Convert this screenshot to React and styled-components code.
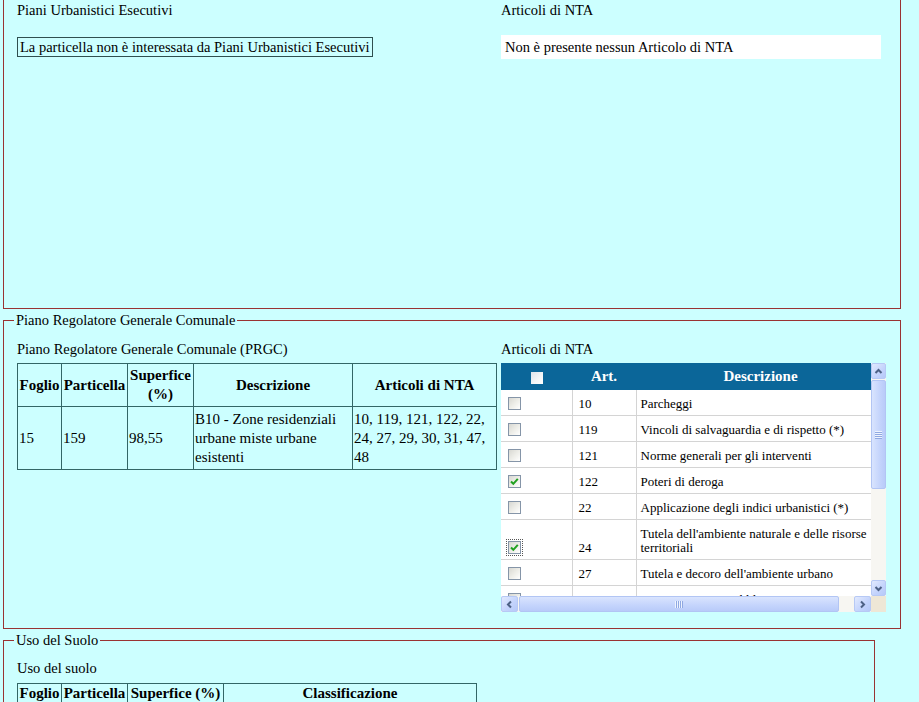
import React from 'react';
import styled, { createGlobalStyle } from 'styled-components';

const Global = createGlobalStyle`
  html, body {
    margin: 0;
    padding: 0;
    background: #ccffff;
  }
  body {
    font-family: "Liberation Serif", "Times New Roman", serif;
    font-size: 14.5px;
    color: #000;
    overflow: hidden;
  }
`;

const Page = styled.div`
  padding-left: 3px;
`;

const Frame = styled.fieldset`
  box-sizing: border-box;
  width: ${p => p.$width}px;
  height: ${p => (p.$height ? `${p.$height}px` : 'auto')};
  margin: 0 0 3px 0;
  padding: ${p => p.$pad};
  border: 1px solid #993333;
  border-top: ${p => (p.$cut ? 'none' : '1px solid #993333')};
  min-width: 0;
`;

const Legend = styled.legend`
  margin-left: -3px;
  padding: 0 2px;
  line-height: 17px;
`;

const Cols = styled.div`
  display: grid;
  grid-template-columns: 484px 1fr;
  align-items: start;
`;

const Col = styled.div`
  display: flex;
  flex-direction: column;
  align-items: flex-start;
`;

const Label = styled.div`
  line-height: 17px;
  margin-bottom: ${p => p.$gap || 0}px;
`;

const NoteBox = styled.div`
  border: 1px solid #2f4f4f;
  padding: 0 2px;
  line-height: 18px;
  font-size: 14.5px;
`;

const EmptyBox = styled.div`
  box-sizing: border-box;
  width: 380px;
  height: 24px;
  background: #ffffff;
  padding-left: 4px;
  line-height: 24px;
`;

/* data tables */
const DataTable = styled.table`
  border-collapse: collapse;
  table-layout: fixed;
  width: ${p => p.$width}px;
  font-size: 15px;
  border: 1px solid #336666;
`;

const Th = styled.th`
  border: 1px solid #336666;
  padding: ${p => p.$pad || '2px 1px'};
  line-height: 19px;
  font-weight: bold;
  text-align: center;
  vertical-align: middle;
`;

const Td = styled.td`
  border: 1px solid #336666;
  padding: 3px 1px 2px;
  line-height: 19px;
  vertical-align: middle;
  text-align: left;
`;

/* articles grid */
const GridShell = styled.div`
  display: grid;
  grid-template-columns: 370px 15px;
  grid-template-rows: 233px 16px;
  width: 385px;
`;

const GridView = styled.div`
  overflow: hidden;
  background: #ffffff;
`;

const GridTable = styled.table`
  border-collapse: collapse;
  table-layout: fixed;
  width: 384px;
  font-size: 13px;
`;

const GridHead = styled.th`
  height: 27px;
  padding: 0;
  background: #0b6699;
  color: #ffffff;
  font-size: 15px;
  font-weight: bold;
  text-align: center;
  vertical-align: middle;
`;

const GridCell = styled.td`
  padding: 7px 4px 4px ${p => p.$left}px;
  line-height: 14px;
  vertical-align: bottom;
  border-bottom: 1px solid #d4d4d4;
  border-left: ${p => (p.$sep ? '1px solid #d4d4d4' : 'none')};
`;

const Check = styled.span`
  display: inline-block;
  box-sizing: border-box;
  width: 13px;
  height: 13px;
  border: 1px solid #8595a8;
  background: linear-gradient(135deg, #d8d8d2 0%, #efefea 55%, #ffffff 100%);
  vertical-align: -2px;
  outline: ${p => (p.$focus ? '1px dotted #555' : 'none')};
  outline-offset: 1px;
  svg {
    display: block;
  }
`;

const HeadCheck = styled.span`
  display: inline-block;
  width: 12px;
  height: 12px;
  background: linear-gradient(135deg, #dde3ea 0%, #f6f7f8 60%, #ffffff 100%);
  vertical-align: middle;
`;

const VScroll = styled.div`
  display: flex;
  flex-direction: column;
  background: #f7f6f2;
`;

const HScroll = styled.div`
  display: flex;
  background: #f7f6f2;
`;

const ScrollBtn = styled.div`
  box-sizing: border-box;
  width: ${p => (p.$horizontal ? '17px' : '15px')};
  height: 16px;
  flex: none;
  border: 1px solid #b7c9f5;
  border-radius: 2px;
  background: linear-gradient(135deg, #e2eafe 0%, #c3d3fc 60%, #b6c9f8 100%);
  display: flex;
  align-items: center;
  justify-content: center;
`;

const Thumb = styled.div`
  box-sizing: border-box;
  flex: none;
  ${p => (p.$horizontal
    ? 'width: 320px; height: 16px; margin-left: 1px;'
    : 'width: 15px; height: 109px; margin-top: 1px;')}
  border: 1px solid #b2c5f4;
  border-radius: 2px;
  background: ${p => (p.$horizontal
    ? 'linear-gradient(180deg, #d9e4fe 0%, #c4d4fc 60%, #b9cbf9 100%)'
    : 'linear-gradient(90deg, #d9e4fe 0%, #c4d4fc 60%, #b9cbf9 100%)')};
  display: flex;
  align-items: center;
  justify-content: center;
`;

const Track = styled.div`
  flex: 1;
`;

const Corner = styled.div`
  background: #eee7d6;
`;

const Arrow = ({ dir }) => {
  const pts = {
    up: '3.5,8 6.5,5 9.5,8',
    down: '3.5,5 6.5,8 9.5,5',
    left: '8,3.5 5,6.5 8,9.5',
    right: '5,3.5 8,6.5 5,9.5',
  }[dir];
  return (
    <svg width="13" height="13" viewBox="0 0 13 13">
      <polyline points={pts} fill="none" stroke="#4d6185" strokeWidth="2" />
    </svg>
  );
};

const Grip = ({ horizontal }) => (
  <svg width={horizontal ? 8 : 7} height={horizontal ? 7 : 8} viewBox={horizontal ? '0 0 8 7' : '0 0 7 8'}>
    {[0, 2, 4, 6].map(i =>
      horizontal ? (
        <line key={i} x1={i + 0.5} y1="0" x2={i + 0.5} y2="7" stroke="#eef3fe" strokeWidth="1" />
      ) : (
        <line key={i} x1="0" y1={i + 0.5} x2="7" y2={i + 0.5} stroke="#eef3fe" strokeWidth="1" />
      )
    )}
    {[1, 3, 5, 7].map(i =>
      horizontal ? (
        <line key={`s${i}`} x1={i + 0.5} y1="0" x2={i + 0.5} y2="7" stroke="#8fa8e2" strokeWidth="1" />
      ) : (
        <line key={`s${i}`} x1="0" y1={i + 0.5} x2="7" y2={i + 0.5} stroke="#8fa8e2" strokeWidth="1" />
      )
    )}
  </svg>
);

const Checkbox = ({ checked, focus }) => (
  <Check $focus={focus}>
    {checked && (
      <svg width="11" height="11" viewBox="0 0 11 11">
        <polyline points="2,5.5 4.3,7.8 8.8,2.8" fill="none" stroke="#21a121" strokeWidth="2" />
      </svg>
    )}
  </Check>
);

const articles = [
  { art: '10', desc: 'Parcheggi' },
  { art: '119', desc: 'Vincoli di salvaguardia e di rispetto (*)' },
  { art: '121', desc: 'Norme generali per gli interventi' },
  { art: '122', desc: 'Poteri di deroga', checked: true },
  { art: '22', desc: 'Applicazione degli indici urbanistici (*)' },
  { art: '24', desc: "Tutela dell'ambiente naturale e delle risorse territoriali", checked: true, focus: true },
  { art: '27', desc: "Tutela e decoro dell'ambiente urbano" },
  { art: '29', desc: 'Aree per servizi pubblici' },
];

const ArticlesGrid = () => (
  <GridShell>
    <GridView>
      <GridTable>
        <colgroup>
          <col style={{ width: 71 }} />
          <col style={{ width: 64 }} />
          <col style={{ width: 249 }} />
        </colgroup>
        <thead>
          <tr>
            <GridHead><HeadCheck /></GridHead>
            <GridHead>Art.</GridHead>
            <GridHead>Descrizione</GridHead>
          </tr>
        </thead>
        <tbody>
          {articles.map(a => (
            <tr key={a.art}>
              <GridCell $left={7}>
                <Checkbox checked={a.checked} focus={a.focus} />
              </GridCell>
              <GridCell $left={6} $sep>{a.art}</GridCell>
              <GridCell $left={4} $sep>{a.desc}</GridCell>
            </tr>
          ))}
        </tbody>
      </GridTable>
    </GridView>
    <VScroll>
      <ScrollBtn><Arrow dir="up" /></ScrollBtn>
      <Thumb><Grip /></Thumb>
      <Track />
      <ScrollBtn><Arrow dir="down" /></ScrollBtn>
    </VScroll>
    <HScroll>
      <ScrollBtn $horizontal><Arrow dir="left" /></ScrollBtn>
      <Thumb $horizontal><Grip horizontal /></Thumb>
      <Track />
      <ScrollBtn $horizontal><Arrow dir="right" /></ScrollBtn>
    </HScroll>
    <Corner />
  </GridShell>
);

export default function App() {
  return (
    <Page>
      <Global />
      <Frame $width={898} $height={309} $cut $pad="2px 0 0 13px">
        <Cols>
          <Col>
            <Label $gap={18}>Piani Urbanistici Esecutivi</Label>
            <NoteBox>La particella non è interessata da Piani Urbanistici Esecutivi</NoteBox>
          </Col>
          <Col>
            <Label $gap={16}>Articoli di NTA</Label>
            <EmptyBox>Non è presente nessun Articolo di NTA</EmptyBox>
          </Col>
        </Cols>
      </Frame>

      <Frame $width={898} $pad="12px 0 16px 13px">
        <Legend>Piano Regolatore Generale Comunale</Legend>
        <Cols>
          <Col>
            <Label $gap={5}>Piano Regolatore Generale Comunale (PRGC)</Label>
            <DataTable $width={479}>
              <colgroup>
                <col style={{ width: 44 }} />
                <col style={{ width: 66 }} />
                <col style={{ width: 66 }} />
                <col style={{ width: 159 }} />
                <col style={{ width: 144 }} />
              </colgroup>
              <thead>
                <tr>
                  <Th>Foglio</Th>
                  <Th>Particella</Th>
                  <Th>Superfice (%)</Th>
                  <Th>Descrizione</Th>
                  <Th>Articoli di NTA</Th>
                </tr>
              </thead>
              <tbody>
                <tr>
                  <Td>15</Td>
                  <Td>159</Td>
                  <Td>98,55</Td>
                  <Td>B10 - Zone residenziali urbane miste urbane esistenti</Td>
                  <Td>10, 119, 121, 122, 22, 24, 27, 29, 30, 31, 47, 48</Td>
                </tr>
              </tbody>
            </DataTable>
          </Col>
          <Col>
            <Label $gap={5}>Articoli di NTA</Label>
            <ArticlesGrid />
          </Col>
        </Cols>
      </Frame>

      <Frame $width={872} $pad="11px 0 16px 13px">
        <Legend>Uso del Suolo</Legend>
        <Label $gap={6}>Uso del suolo</Label>
        <DataTable $width={459}>
          <colgroup>
            <col style={{ width: 44 }} />
            <col style={{ width: 66 }} />
            <col style={{ width: 96 }} />
            <col style={{ width: 253 }} />
          </colgroup>
          <thead>
            <tr>
              <Th $pad="0 1px 1px">Foglio</Th>
              <Th $pad="0 1px 1px">Particella</Th>
              <Th $pad="0 1px 1px">Superfice (%)</Th>
              <Th $pad="0 1px 1px">Classificazione</Th>
            </tr>
          </thead>
        </DataTable>
      </Frame>
    </Page>
  );
}
